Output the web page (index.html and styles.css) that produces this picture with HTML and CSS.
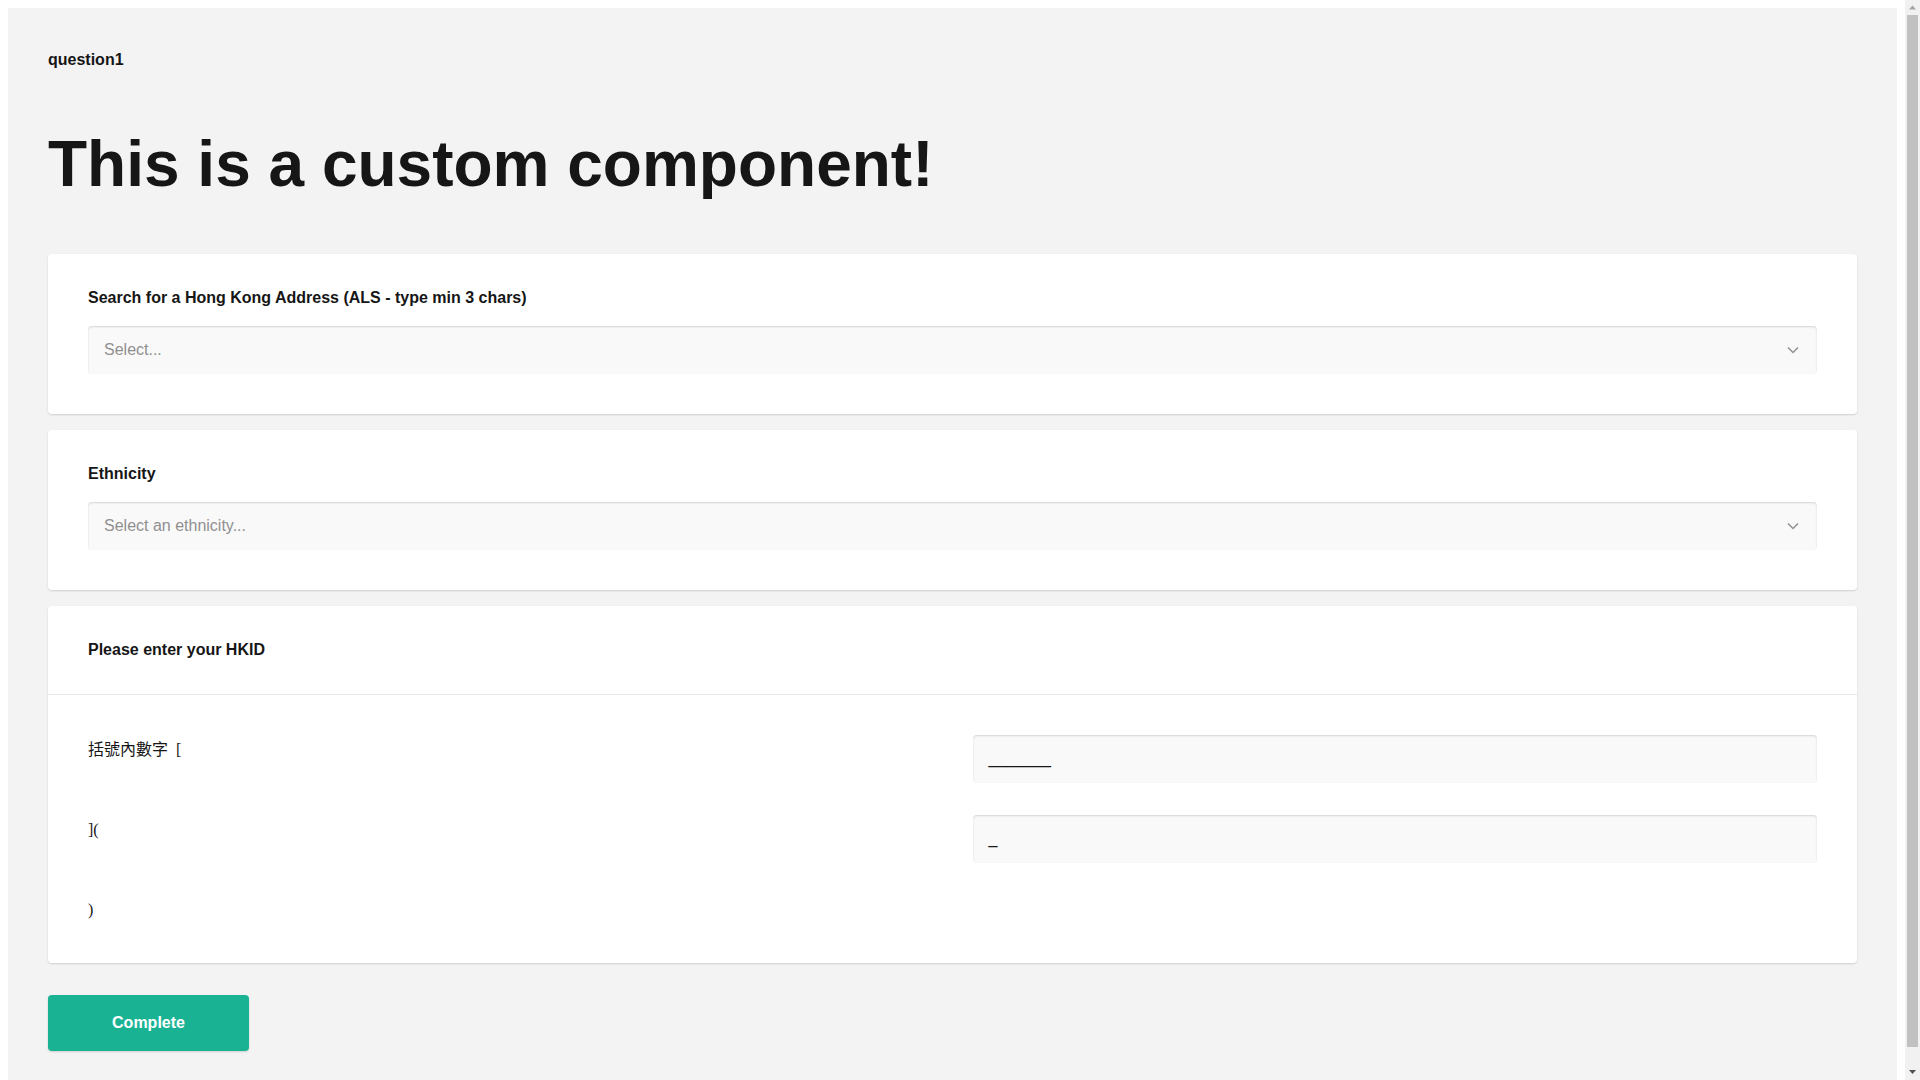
FILE: index.html
```html
<!DOCTYPE html>
<html lang="en">
<head>
<meta charset="utf-8">
<title>Survey</title>
<link rel="stylesheet" href="styles.css">
</head>
<body>
  <div class="page">
    <div class="survey">
      <div class="survey-title">question1</div>
      <h1 class="heading">This is a custom component!</h1>

      <div class="questions">
        <div class="card">
          <div class="q-title">Search for a Hong Kong Address (ALS - type min 3 chars)</div>
          <div class="select">
            <span class="placeholder">Select...</span>
            <svg class="chevron" width="24" height="24" viewBox="0 0 24 24"><path d="M7 9.5 L12 14.5 L17 9.5" fill="none" stroke="#909090" stroke-width="1.5"/></svg>
          </div>
        </div>

        <div class="card">
          <div class="q-title">Ethnicity</div>
          <div class="select">
            <span class="placeholder">Select an ethnicity...</span>
            <svg class="chevron" width="24" height="24" viewBox="0 0 24 24"><path d="M7 9.5 L12 14.5 L17 9.5" fill="none" stroke="#909090" stroke-width="1.5"/></svg>
          </div>
        </div>

        <div class="card card-panel">
          <div class="panel-header">
            <div class="q-title">Please enter your HKID</div>
          </div>
          <div class="panel-body">
            <div class="hkid-grid">
              <div class="hkid-text">括號內數字&nbsp; [</div>
              <div class="input">_______</div>
              <div class="hkid-text">](</div>
              <div class="input">_</div>
              <div class="hkid-text">)</div>
            </div>
          </div>
        </div>
      </div>

      <div class="nav">
        <button class="complete">Complete</button>
      </div>
    </div>
  </div>

  <div class="scrollbar" aria-hidden="true">
    <svg class="sb-arrow" width="15" height="15" viewBox="0 0 15 15"><polygon points="4,9.5 11,9.5 7.5,5.5" fill="#a3a3a3"/></svg>
    <div class="sb-track">
      <div class="sb-thumb"></div>
    </div>
    <svg class="sb-arrow" width="15" height="15" viewBox="0 0 15 15"><polygon points="4,5 11,5 7.5,9" fill="#505050"/></svg>
  </div>
</body>
</html>
```

FILE: styles.css
```css
html, body {
  margin: 0;
  padding: 0;
  background: #ffffff;
  height: 100%;
  overflow: hidden;
}

body {
  display: flex;
  font-family: "Liberation Sans", Arial, "Noto Sans CJK TC", sans-serif;
  color: #161616;
}

.page {
  flex: 1;
  height: 100vh;
  overflow: hidden;
  background: #ffffff;
}

.scrollbar {
  width: 15px;
  flex: 0 0 15px;
  height: 100vh;
  background: #f1f1f1;
  display: flex;
  flex-direction: column;
}

.sb-arrow {
  display: block;
  flex: 0 0 15px;
}

.sb-track {
  flex: 1;
  display: flex;
  flex-direction: column;
}

.sb-thumb {
  height: 1032px;
  margin: 0 2px;
  background: #c1c1c1;
}

.survey {
  margin: 8px;
  background: #f3f3f3;
  padding: 40px;
}

.survey-title {
  font-size: 16px;
  line-height: 24px;
  font-weight: bold;
}

.heading {
  margin: 55px 0 0 0;
  font-size: 64px;
  line-height: 74px;
  font-weight: bold;
  color: #161616;
}

.questions {
  margin-top: 53px;
  display: flex;
  flex-direction: column;
  gap: 16px;
}

.card {
  background: #ffffff;
  border-radius: 4px;
  box-shadow: 0 1px 2px rgba(0, 0, 0, 0.15);
  padding: 32px 40px 40px 40px;
  display: flex;
  flex-direction: column;
  gap: 16px;
}

.q-title {
  font-size: 16px;
  line-height: 24px;
  font-weight: bold;
  color: #161616;
}

.select {
  height: 48px;
  box-sizing: border-box;
  background: #f9f9f9;
  border-radius: 4px;
  box-shadow: inset 0 1px 2px rgba(0, 0, 0, 0.15);
  padding: 0 12px 0 16px;
  display: flex;
  align-items: center;
  justify-content: space-between;
}

.placeholder {
  font-size: 16px;
  line-height: 24px;
  color: #909090;
}

.chevron {
  display: block;
}

.card-panel {
  padding: 0;
  gap: 0;
}

.panel-header {
  padding: 32px 40px;
  border-bottom: 1px solid #e8e8e8;
}

.panel-body {
  padding: 40px 40px 41px 40px;
}

.hkid-grid {
  display: grid;
  grid-template-columns: 1fr 1fr;
  column-gap: 40px;
  row-gap: 32px;
  align-items: start;
}

.hkid-text {
  padding-top: 3px;
  font-family: "Liberation Serif", "Noto Sans CJK TC", serif;
  font-size: 16px;
  line-height: 24px;
  color: #161616;
}

.input {
  height: 48px;
  box-sizing: border-box;
  background: #f9f9f9;
  border-radius: 4px;
  box-shadow: inset 0 1px 2px rgba(0, 0, 0, 0.15);
  padding: 12px 16px;
  font-size: 16px;
  line-height: 24px;
  color: #161616;
}

.nav {
  margin-top: 32px;
  display: flex;
}

.complete {
  width: 201px;
  height: 56px;
  border: none;
  border-radius: 4px;
  background: #19b394;
  box-shadow: 0 1px 2px rgba(0, 0, 0, 0.15);
  color: #ffffff;
  font-family: "Liberation Sans", Arial, sans-serif;
  font-size: 16px;
  line-height: 24px;
  font-weight: bold;
  cursor: pointer;
}
```
